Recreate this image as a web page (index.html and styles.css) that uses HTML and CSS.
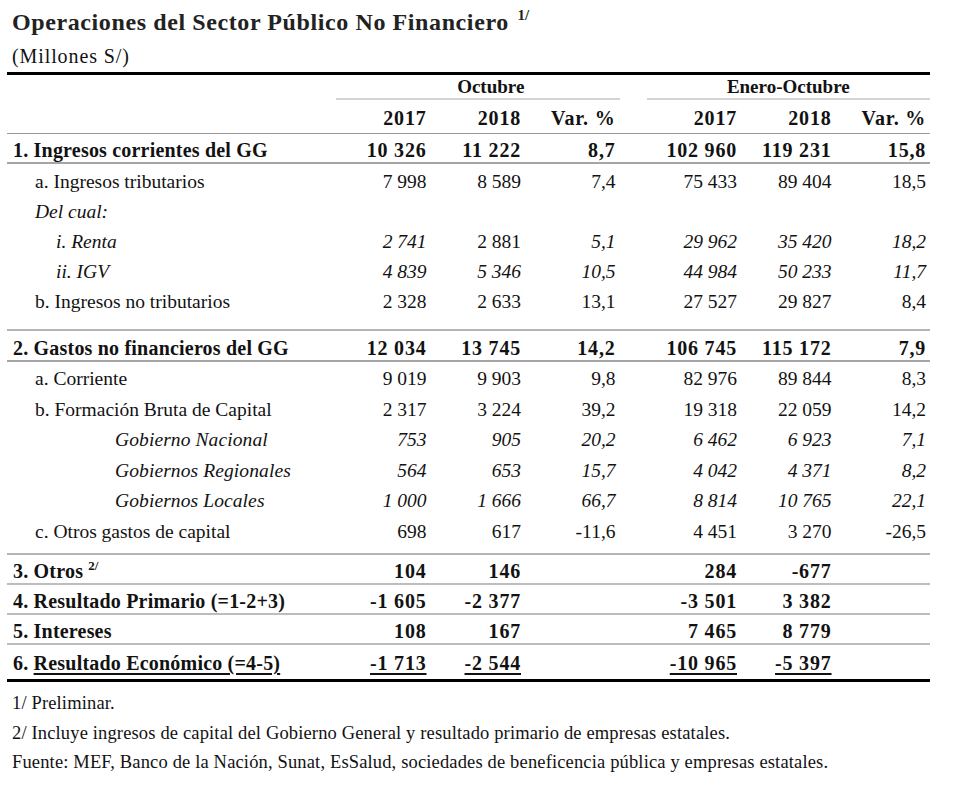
FILE: index.html
```html
<!DOCTYPE html>
<html lang="es">
<head>
<meta charset="utf-8">
<title>Operaciones del Sector Público No Financiero</title>
<link rel="stylesheet" href="styles.css">
</head>
<body>
<div class="page">
  <h1 class="title">Operaciones del Sector Público No Financiero <sup class="note">1/</sup></h1>
  <p class="unit">(Millones S/)</p>
  <table class="ops">
    <colgroup>
      <col class="c-label">
      <col class="c-num"><col class="c-num"><col class="c-num">
      <col class="c-gap">
      <col class="c-num"><col class="c-num"><col class="c-num">
    </colgroup>
    <thead>
      <tr class="grp">
        <th></th>
        <th colspan="3" class="grp-h grp-oct">Octubre</th>
        <th></th>
        <th colspan="3" class="grp-h">Enero-Octubre</th>
      </tr>
      <tr class="yrs">
        <th></th><th>2017</th><th>2018</th><th>Var. %</th>
        <th></th><th>2017</th><th>2018</th><th>Var. %</th>
      </tr>
    </thead>
    <tbody>
      <tr class="main">
        <td class="lbl">1. Ingresos corrientes del GG</td>
        <td>10 326</td><td>11 222</td><td>8,7</td><td></td>
        <td>102 960</td><td>119 231</td><td>15,8</td>
      </tr>
      <tr class="sub">
        <td class="lbl l1">a. Ingresos tributarios</td>
        <td>7 998</td><td>8 589</td><td>7,4</td><td></td>
        <td>75 433</td><td>89 404</td><td>18,5</td>
      </tr>
      <tr class="sub">
        <td class="lbl l1 it">Del cual:</td>
        <td></td><td></td><td></td><td></td><td></td><td></td><td></td>
      </tr>
      <tr class="sub">
        <td class="lbl l2 it">i. Renta</td>
        <td class="it">2 741</td><td>2 881</td><td class="it">5,1</td><td></td>
        <td class="it">29 962</td><td class="it">35 420</td><td class="it">18,2</td>
      </tr>
      <tr class="sub it">
        <td class="lbl l2">ii. IGV</td>
        <td>4 839</td><td>5 346</td><td>10,5</td><td></td>
        <td>44 984</td><td>50 233</td><td>11,7</td>
      </tr>
      <tr class="sub">
        <td class="lbl l1">b. Ingresos no tributarios</td>
        <td>2 328</td><td>2 633</td><td>13,1</td><td></td>
        <td>27 527</td><td>29 827</td><td>8,4</td>
      </tr>
      <tr class="gap gap1"><td colspan="8"></td></tr>

      <tr class="main main2">
        <td class="lbl">2. Gastos no financieros del GG</td>
        <td>12 034</td><td>13 745</td><td>14,2</td><td></td>
        <td>106 745</td><td>115 172</td><td>7,9</td>
      </tr>
      <tr class="sub2 first">
        <td class="lbl l1">a. Corriente</td>
        <td>9 019</td><td>9 903</td><td>9,8</td><td></td>
        <td>82 976</td><td>89 844</td><td>8,3</td>
      </tr>
      <tr class="sub2">
        <td class="lbl l1">b. Formación Bruta de Capital</td>
        <td>2 317</td><td>3 224</td><td>39,2</td><td></td>
        <td>19 318</td><td>22 059</td><td>14,2</td>
      </tr>
      <tr class="sub2 it">
        <td class="lbl l3">Gobierno Nacional</td>
        <td>753</td><td>905</td><td>20,2</td><td></td>
        <td>6 462</td><td>6 923</td><td>7,1</td>
      </tr>
      <tr class="sub2 it">
        <td class="lbl l3">Gobiernos Regionales</td>
        <td>564</td><td>653</td><td>15,7</td><td></td>
        <td>4 042</td><td>4 371</td><td>8,2</td>
      </tr>
      <tr class="sub2 it">
        <td class="lbl l3">Gobiernos Locales</td>
        <td>1 000</td><td>1 666</td><td>66,7</td><td></td>
        <td>8 814</td><td>10 765</td><td>22,1</td>
      </tr>
      <tr class="sub2">
        <td class="lbl l1">c. Otros gastos de capital</td>
        <td>698</td><td>617</td><td>-11,6</td><td></td>
        <td>4 451</td><td>3 270</td><td>-26,5</td>
      </tr>
      <tr class="gap gap2"><td colspan="8"></td></tr>

      <tr class="tot">
        <td class="lbl">3. Otros <sup class="note note-sm">2/</sup></td>
        <td>104</td><td>146</td><td></td><td></td>
        <td>284</td><td>-677</td><td></td>
      </tr>
      <tr class="tot">
        <td class="lbl">4. Resultado Primario (=1-2+3)</td>
        <td>-1 605</td><td>-2 377</td><td></td><td></td>
        <td>-3 501</td><td>3 382</td><td></td>
      </tr>
      <tr class="tot">
        <td class="lbl">5. Intereses</td>
        <td>108</td><td>167</td><td></td><td></td>
        <td>7 465</td><td>8 779</td><td></td>
      </tr>
      <tr class="tot last">
        <td class="lbl">6. <span class="ul">Resultado Económico (=4-5)</span></td>
        <td><span class="ul">-1 713</span></td><td><span class="ul">-2 544</span></td><td></td><td></td>
        <td><span class="ul">-10 965</span></td><td><span class="ul">-5 397</span></td><td></td>
      </tr>
    </tbody>
  </table>
  <div class="notes">
    <p>1/ Preliminar.</p>
    <p>2/ Incluye ingresos de capital del Gobierno General y resultado primario de empresas estatales.</p>
    <p>Fuente: MEF, Banco de la Nación, Sunat, EsSalud, sociedades de beneficencia pública y empresas estatales.</p>
  </div>
</div>
</body>
</html>
```

FILE: styles.css
```css
* { box-sizing: border-box; }
html, body { margin: 0; padding: 0; background: #fff; }
body {
  font-family: "Liberation Serif", "Times New Roman", serif;
  color: #121212;
  width: 980px;
  height: 790px;
  overflow: hidden;
}
.page { padding-top: 8px; }

.title {
  margin: 0 0 0 12px;
  font-size: 24px;
  line-height: 28px;
  font-weight: bold;
  letter-spacing: 0.6px;
  color: #222;
}
.note {
  font-size: 15px;
  font-weight: bold;
  letter-spacing: 0;
  vertical-align: 10px;
  line-height: 0;
}
.title .note { margin-left: 2px; }
.note-sm { font-size: 13px; vertical-align: 8px; }

.unit {
  margin: 6px 0 0 12px;
  font-size: 20px;
  line-height: 28px;
  letter-spacing: 0.9px;
}

.ops {
  margin: 2px 0 0 7px;
  width: 923px;
  table-layout: fixed;
  border-collapse: separate;
  border-spacing: 0;
  border-top: 3px solid #000;
  border-bottom: 3px solid #000;
}
.c-label { width: 329px; }
.c-num { width: 94.5px; }
.c-gap { width: 27px; }

.ops th, .ops td {
  padding: 0 4px 0 0;
  text-align: right;
  vertical-align: bottom;
  font-size: 19.5px;
  line-height: 24px;
  white-space: nowrap;
}
.ops th {
  font-weight: bold;
  font-size: 19px;
}

/* group header */
.grp { height: 25px; }
.grp th { line-height: 22px; }
.ops th.grp-h {
  text-align: center;
  border-bottom: 2px solid #d4d4d4;
  padding: 0;
}
.ops th.grp-oct { padding-left: 26px; }

/* years header */
.yrs { height: 34px; }
.yrs th {
  border-bottom: 1px solid #9a9a9a;
  padding-bottom: 3px;
  font-size: 20px;
  letter-spacing: 0.8px;
}

/* bold main rows */
.main { height: 30px; }
.main2 { height: 31px; }
.main td, .tot td {
  font-weight: bold;
  font-size: 20px;
  letter-spacing: 0.8px;
}
.main td { border-bottom: 2px solid #a5a5a5; padding-bottom: 0; }
.ops .main td.lbl, .ops .tot td.lbl { letter-spacing: 0.2px; }

.sub { height: 30px; }
.sub2 { height: 30.5px; }
.sub2.first { height: 29px; }

.gap1 { height: 17px; }
.gap2 { height: 11.5px; }
.gap td { border-bottom: 2px solid #b5b5b5; }

.tot { height: 30px; }
.tot td { border-bottom: 2px solid #bdbdbd; }
.tot.last { height: 34px; }
.tot.last td { border-bottom: 0; padding-bottom: 4px; }

.ops td.lbl { text-align: left; padding-left: 6px; }
.ops td.l1 { padding-left: 28px; }
.ops td.l2 { padding-left: 49px; }
.ops td.l3 { padding-left: 108px; letter-spacing: 0.1px; }

.it td, td.it { font-style: italic; }

.ul {
  text-decoration: underline;
  text-decoration-thickness: 1.5px;
  text-underline-offset: 3px;
}

.notes { margin: 7px 0 0 12px; }
.notes p {
  margin: 0;
  font-size: 18.5px;
  line-height: 29.5px;
  letter-spacing: 0.15px;
}
```
